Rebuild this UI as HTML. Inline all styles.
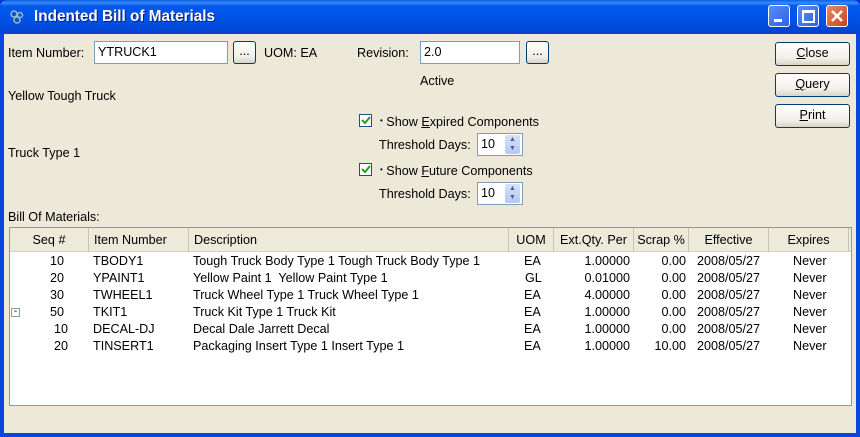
<!DOCTYPE html><html><head><style>
*{margin:0;padding:0;box-sizing:border-box}
body{width:860px;height:437px;overflow:hidden;font-family:"Liberation Sans",sans-serif;font-size:12.6px;color:#000;background:#0831d9}
.win{position:absolute;left:0;top:0;width:860px;height:437px;background:#0846e0;border-radius:7px 7px 0 0}
.title{position:absolute;left:0;top:0;width:860px;height:34px;border-radius:7px 7px 0 0;background:linear-gradient(#0a5ee8 0,#3b8cf5 3px,#0058ee 6px,#0052e6 20px,#0046d4 30px,#0a44c8 34px)}
.title span{position:absolute;left:34px;top:8px;color:#fff;font-weight:bold;font-size:15.3px;text-shadow:1px 1px #0a1f7a}
.body{position:absolute;left:4px;top:34px;width:852px;height:399px;background:#ece9d8}
.a{position:absolute;white-space:nowrap}
.inp{position:absolute;background:#fff;border:1px solid #7f9db9;padding:2px 3px;height:23px;line-height:17px}
.btn{position:absolute;border:1px solid #003c74;border-radius:3px;background:linear-gradient(#fff,#f0efe8 70%,#d8d4c8);text-align:center;line-height:20px}
.cb{position:absolute;width:13px;height:13px;border:1px solid #1c5180;background:#fff}
.tb{position:absolute;top:5px;width:22px;height:22px;border:1px solid #fff;border-radius:3px;background:linear-gradient(135deg,#5a8ef7,#2a62e6)}
.spin{position:absolute;width:15px;height:19px;right:2px;top:1px;background:linear-gradient(#d6e2fc,#b4c8f5);border-radius:2px;font-size:7px;line-height:9px;text-align:center;color:#4d6185}
.grid{position:absolute;left:5px;top:193px;width:843px;height:179px;border:1px solid #7f9db9;background:#fff;overflow:hidden}
.hd{position:absolute;top:0;height:24px;line-height:24px;background:#ebeadb;border-bottom:1px solid #d6d2c2;width:100%}
.hd div{position:absolute;top:0;height:24px;text-align:center;border-right:1px solid #c7c5b2;white-space:nowrap;overflow:hidden}
.r{position:absolute;left:0;width:100%;height:17px;line-height:17px}
.r span{position:absolute;white-space:nowrap}
</style></head><body>
<div class="win">
<div class="title"><svg style="position:absolute;left:9px;top:9px" width="16" height="16"><circle cx="5" cy="5" r="3" fill="none" stroke="#9bb" stroke-width="1.5"/><circle cx="11" cy="6" r="2.5" fill="none" stroke="#9bb" stroke-width="1.5"/><circle cx="8" cy="11" r="3" fill="none" stroke="#9bb" stroke-width="1.5"/></svg><span>Indented Bill of Materials</span>
<div class="tb" style="left:768px"><div style="position:absolute;left:5px;top:13px;width:8px;height:3px;background:#fff"></div></div>
<div class="tb" style="left:797px"><div style="position:absolute;left:4px;top:4px;width:13px;height:13px;border:2px solid #fff;border-top-width:3px"></div></div>
<div class="tb" style="left:826px;background:linear-gradient(135deg,#e88a6a,#c8421a)"><svg width="20" height="20"><path d="M5 5L15 15M15 5L5 15" stroke="#fff" stroke-width="2.5"/></svg></div>
</div>
<div class="body">
<div class="a" style="left:4px;top:12px">Item Number:</div>
<div class="inp" style="left:90px;top:7px;width:134px">YTRUCK1</div>
<div class="btn" style="left:229px;top:7px;width:23px;height:23px;line-height:18px">...</div>
<div class="a" style="left:260px;top:12px">UOM: EA</div>
<div class="a" style="left:353px;top:12px">Revision:</div>
<div class="inp" style="left:416px;top:7px;width:100px">2.0</div>
<div class="btn" style="left:522px;top:7px;width:23px;height:23px;line-height:18px">...</div>
<div class="a" style="left:416px;top:40px">Active</div>
<div class="a" style="left:4px;top:55px">Yellow Tough Truck</div>
<div class="a" style="left:4px;top:112px">Truck Type 1</div>
<div class="cb" style="left:355px;top:80px"><svg width="11" height="11"><path d="M2 5l3 3 5-6" stroke="#21a121" stroke-width="2" fill="none"/></svg></div>
<div class="a" style="left:376px;top:81px"><span style="font-size:8px;vertical-align:3px">•</span> Show <u>E</u>xpired Components</div>
<div class="a" style="left:375px;top:104px">Threshold Days:</div>
<div class="inp" style="left:473px;top:99px;width:46px">10<div class="spin">▲<br>▼</div></div>
<div class="cb" style="left:355px;top:129px"><svg width="11" height="11"><path d="M2 5l3 3 5-6" stroke="#21a121" stroke-width="2" fill="none"/></svg></div>
<div class="a" style="left:376px;top:130px"><span style="font-size:8px;vertical-align:3px">•</span> Show <u>F</u>uture Components</div>
<div class="a" style="left:375px;top:153px">Threshold Days:</div>
<div class="inp" style="left:473px;top:148px;width:46px">10<div class="spin">▲<br>▼</div></div>
<div class="btn" style="left:771px;top:8px;width:75px;height:24px"><u>C</u>lose</div>
<div class="btn" style="left:771px;top:39px;width:75px;height:24px"><u>Q</u>uery</div>
<div class="btn" style="left:771px;top:70px;width:75px;height:24px"><u>P</u>rint</div>
<div class="a" style="left:4px;top:176px">Bill Of Materials:</div>
<div class="grid">
<div class="hd">
<div style="left:0;width:79px">Seq #</div>
<div style="left:79px;width:100px;text-align:left;padding-left:5px">Item Number</div>
<div style="left:179px;width:320px;text-align:left;padding-left:5px">Description</div>
<div style="left:499px;width:45px">UOM</div>
<div style="left:544px;width:80px">Ext.Qty. Per</div>
<div style="left:624px;width:55px">Scrap %</div>
<div style="left:679px;width:80px">Effective</div>
<div style="left:759px;width:80px">Expires</div>
</div>
<div class="r" style="top:25px"><span style="left:40px">10</span><span style="left:83px">TBODY1</span><span style="left:183px">Tough Truck Body Type 1 Tough Truck Body Type 1</span><span style="left:514px">EA</span><span style="right:221px">1.00000</span><span style="right:165px">0.00</span><span style="left:687px">2008/05/27</span><span style="left:783px">Never</span></div>
<div class="r" style="top:42px"><span style="left:40px">20</span><span style="left:83px">YPAINT1</span><span style="left:183px">Yellow Paint 1&nbsp; Yellow Paint Type 1</span><span style="left:515px">GL</span><span style="right:221px">0.01000</span><span style="right:165px">0.00</span><span style="left:687px">2008/05/27</span><span style="left:783px">Never</span></div>
<div class="r" style="top:59px"><span style="left:40px">30</span><span style="left:83px">TWHEEL1</span><span style="left:183px">Truck Wheel Type 1 Truck Wheel Type 1</span><span style="left:514px">EA</span><span style="right:221px">4.00000</span><span style="right:165px">0.00</span><span style="left:687px">2008/05/27</span><span style="left:783px">Never</span></div>
<div class="r" style="top:76px"><span style="left:1px;top:4px;width:9px;height:9px;border:1px solid #7f9db9;line-height:5px;font-size:10px;text-align:center">-</span><span style="left:40px">50</span><span style="left:83px">TKIT1</span><span style="left:183px">Truck Kit Type 1 Truck Kit</span><span style="left:514px">EA</span><span style="right:221px">1.00000</span><span style="right:165px">0.00</span><span style="left:687px">2008/05/27</span><span style="left:783px">Never</span></div>
<div class="r" style="top:93px"><span style="left:44px">10</span><span style="left:83px">DECAL-DJ</span><span style="left:183px">Decal Dale Jarrett Decal</span><span style="left:514px">EA</span><span style="right:221px">1.00000</span><span style="right:165px">0.00</span><span style="left:687px">2008/05/27</span><span style="left:783px">Never</span></div>
<div class="r" style="top:110px"><span style="left:44px">20</span><span style="left:83px">TINSERT1</span><span style="left:183px">Packaging Insert Type 1 Insert Type 1</span><span style="left:514px">EA</span><span style="right:221px">1.00000</span><span style="right:165px">10.00</span><span style="left:687px">2008/05/27</span><span style="left:783px">Never</span></div>
</div>
</div></div>
</body></html>
